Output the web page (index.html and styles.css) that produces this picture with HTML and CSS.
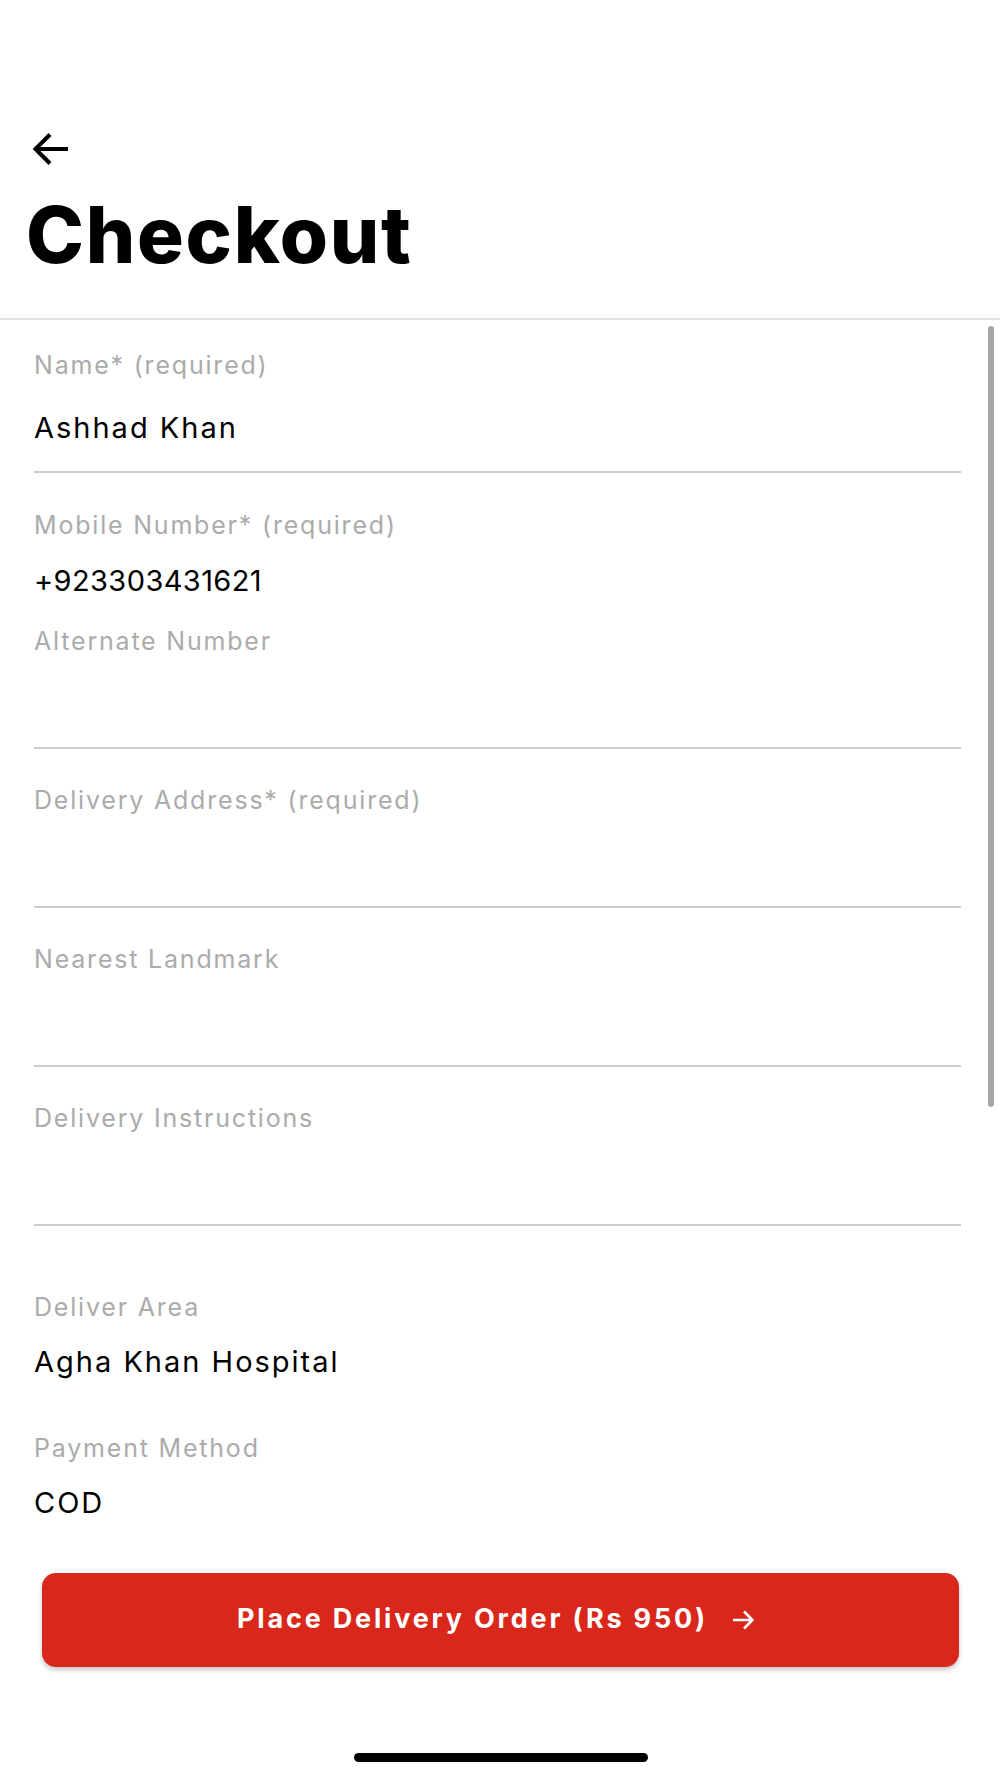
FILE: index.html
```html
<!DOCTYPE html>
<html lang="en">
<head>
<meta charset="utf-8">
<title>Checkout</title>
<link rel="stylesheet" href="styles.css">
</head>
<body>
<div class="screen">
  <header class="header">
    <svg class="back" width="40" height="40" viewBox="0 0 40 40" aria-hidden="true">
      <path d="M37 20 H5 M19 5.5 L4.5 20 L19 34.5" fill="none" stroke="#000" stroke-width="4" stroke-linecap="butt" stroke-linejoin="miter"/>
    </svg>
    <h1 class="title">Checkout</h1>
  </header>

  <main class="content">
    <div class="scrollbar"></div>

    <div class="field input">
      <div class="label">Name* (required)</div>
      <div class="input-area"><span class="value">Ashhad Khan</span></div>
    </div>

    <div class="field plain mobile">
      <div class="label">Mobile Number* (required)</div>
      <div class="value digits">+923303431621</div>
    </div>

    <div class="field input alt">
      <div class="label">Alternate Number</div>
      <div class="input-area"></div>
    </div>

    <div class="field input">
      <div class="label">Delivery Address* (required)</div>
      <div class="input-area"></div>
    </div>

    <div class="field input">
      <div class="label">Nearest Landmark</div>
      <div class="input-area"></div>
    </div>

    <div class="field input">
      <div class="label">Delivery Instructions</div>
      <div class="input-area"></div>
    </div>

    <div class="field plain area">
      <div class="label">Deliver Area</div>
      <div class="value">Agha Khan Hospital</div>
    </div>

    <div class="field plain payment">
      <div class="label">Payment Method</div>
      <div class="value">COD</div>
    </div>
  </main>

  <div class="footer">
    <button class="order-btn" type="button">
      <span>Place Delivery Order (Rs 950)</span>
      <svg class="btn-arrow" width="22" height="20" viewBox="0 0 22 20" aria-hidden="true">
        <path d="M1 10 H20 M12 1.5 L20.5 10 L12 18.5" fill="none" stroke="#fff" stroke-width="2.6"/>
      </svg>
    </button>
    <div class="home-indicator"></div>
  </div>
</div>
</body>
</html>
```

FILE: styles.css
```css
* { box-sizing: border-box; }

html, body {
  margin: 0;
  padding: 0;
  background: #ffffff;
}

body {
  font-family: "Inter", "Liberation Sans", sans-serif;
  color: #000;
}

.screen {
  width: 1000px;
  height: 1778px;
  display: flex;
  flex-direction: column;
  position: relative;
  overflow: hidden;
}

.header {
  padding: 129px 0 36px 31px;
  border-bottom: 2px solid #e2e2e2;
}

.back {
  display: block;
}

.title {
  margin: 19px 0 0 -5px;
  font-size: 78px;
  line-height: 94px;
  font-weight: 800;
  letter-spacing: 1.7px;
  height: 94px;
}

.content {
  position: relative;
  padding: 30px 39px 0 34px;
  display: flex;
  flex-direction: column;
}

.scrollbar {
  position: absolute;
  left: 988px;
  top: 6px;
  width: 6px;
  height: 781px;
  border-radius: 3px;
  background: #a6a6a6;
}

.label {
  font-size: 25px;
  line-height: 30px;
  height: 30px;
  color: #ababab;
  letter-spacing: 1.8px;
  white-space: nowrap;
}

.value {
  display: block;
  font-size: 29px;
  line-height: 36px;
  height: 36px;
  color: #000;
  letter-spacing: 2px;
  white-space: nowrap;
}

.value.digits {
  letter-spacing: 0.4px;
}

.field.input .input-area {
  height: 93px;
  padding-top: 30px;
  border-bottom: 2px solid #cccccc;
}

.field.input + .field {
  margin-top: 36px;
}

.field.mobile {
  margin-top: 37px !important;
}

.field.plain .value {
  margin-top: 22px;
}

.field.mobile .value {
  margin-top: 23px;
}

.field.alt {
  margin-top: 27px;
}

.field.area {
  margin-top: 66px !important;
}

.field.payment {
  margin-top: 53px;
}

.footer {
  padding: 52px 41px 0 42px;
  display: flex;
  flex-direction: column;
  align-items: center;
}

.order-btn {
  width: 917px;
  height: 94px;
  border: none;
  border-radius: 14px;
  background: #d9271c;
  box-shadow: 0 3px 5px rgba(0, 0, 0, 0.22);
  color: #fff;
  font-family: "Inter", "Liberation Sans", sans-serif;
  font-size: 27px;
  font-weight: 700;
  letter-spacing: 2.8px;
  display: flex;
  align-items: center;
  justify-content: center;
  gap: 24px;
  padding: 0 10px 4px 0;
}

.btn-arrow {
  display: block;
  margin-top: 3px;
}

.home-indicator {
  margin-top: 86px;
  width: 294px;
  height: 9px;
  border-radius: 5px;
  background: #000;
}
```
